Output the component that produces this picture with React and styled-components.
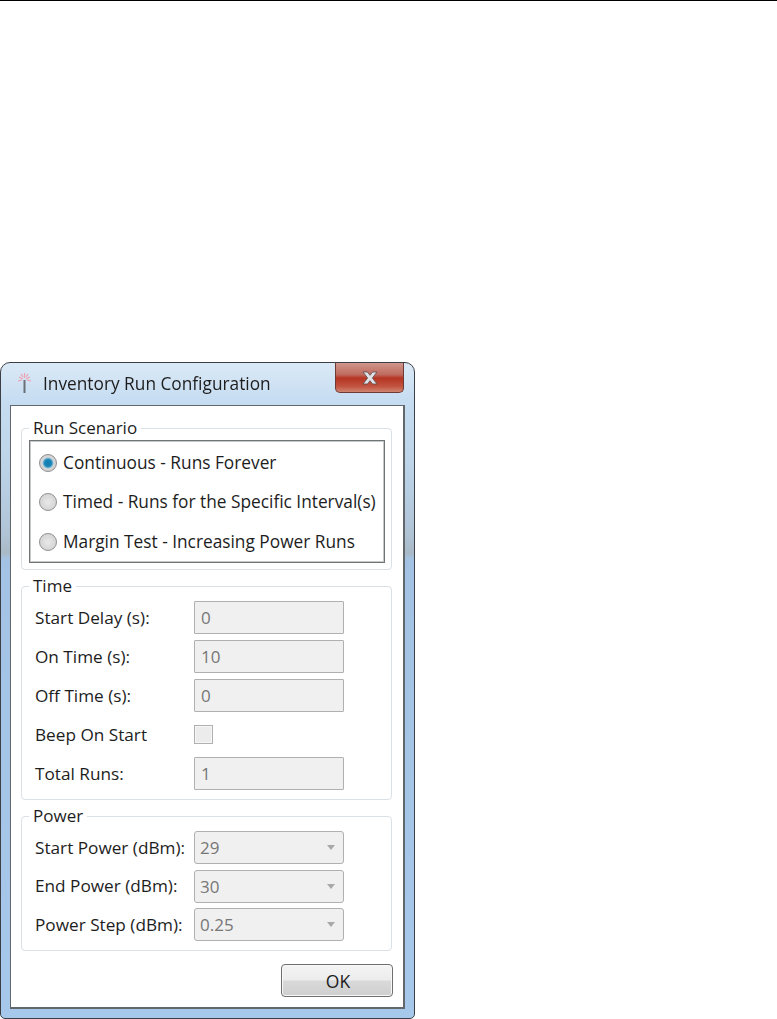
import React from "react";
import styled, { createGlobalStyle } from "styled-components";

const Global = createGlobalStyle`
  html, body { margin: 0; padding: 0; background: #fff; }
  body { font-family: "Open Sans", "Noto Sans", sans-serif; color: #1d1d1d; }
`;

const Page = styled.div`
  width: 777px;
  height: 1019px;
  overflow: hidden;
  border-top: 1px solid #000;
  box-sizing: border-box;
  padding-top: 361px;
`;

const Window = styled.div`
  width: 415px;
  height: 657px;
  box-sizing: border-box;
  border: 1px solid #3c4046;
  border-radius: 10px 10px 5px 5px;
  padding: 0 9px 9px;
  display: flex;
  flex-direction: column;
  filter: blur(0.35px);
  background: linear-gradient(180deg, #dbe9f6 0, #c5dcf1 6%, #bcd3e8 16%, #b0c4d6 26%, #a9b9c7 29%, #a4c3e4 30%, #a6c8ea 100%);
`;

const TitleBar = styled.div`
  height: 42px;
  display: flex;
  align-items: flex-start;
  flex-shrink: 0;
`;

const AppIcon = styled.svg`
  width: 20px;
  height: 24px;
  margin: 9px 0 0 5px;
  flex-shrink: 0;
`;

const Title = styled.div`
  margin: 10px 0 0 8px;
  font-size: 17.3px;
  line-height: 22px;
  white-space: nowrap;
  flex: 1;
`;

const CloseButton = styled.div`
  width: 69px;
  height: 30px;
  box-sizing: border-box;
  margin-right: 1px;
  border: 1px solid #6e3a36;
  border-top: 0;
  border-radius: 0 0 5px 5px;
  background: linear-gradient(180deg, #d0968c 0, #bf6a5e 40%, #b53523 52%, #c25240 80%, #cf8570 100%);
  display: flex;
  align-items: center;
  justify-content: center;
`;

const Client = styled.div`
  flex: 1;
  box-sizing: border-box;
  background: #fff;
  border: 1px solid #62676c;
  border-right-width: 2px;
  border-bottom-width: 2px;
  padding: 12px 11px 9px 10px;
  display: flex;
  flex-direction: column;
  gap: 6px;
`;

const Group = styled.fieldset`
  margin: 0;
  padding: 0;
  min-width: 0;
  border: 1px solid #d9e0e6;
  border-radius: 4px;
`;

const GroupBody = styled.div`
  padding: ${p => p.$pad};
`;

const Legend = styled.legend`
  margin-left: 7px;
  padding: 0 4px;
  font-size: 17px;
  line-height: 20px;
`;

const ScenarioBox = styled.div`
  height: 123px;
  box-sizing: border-box;
  border: 1px solid #6f7477;
  box-shadow: inset 0 0 0 1px #c8c8c8;
  padding: 2px 0 0 9px;
  display: flex;
  flex-direction: column;
  justify-content: space-around;
`;

const RadioRow = styled.div`
  display: flex;
  align-items: center;
  gap: 6px;
  font-size: 17.3px;
  line-height: 20px;
  white-space: nowrap;
`;

const RadioDot = styled.span`
  width: 18px;
  height: 18px;
  box-sizing: border-box;
  border-radius: 50%;
  border: 1px solid #8f8f8f;
  flex-shrink: 0;
  background: ${p => p.$on
    ? "radial-gradient(circle at 50% 50%, #0f7fb5 0, #1a83b4 30%, #6fb4d2 42%, #d8d8d8 52%, #c2c2c2 100%)"
    : "radial-gradient(circle at 50% 50%, #e9e9e9 0, #dcdcdc 45%, #cfcfcf 100%)"};
`;

const Form = styled.div`
  display: grid;
  grid-template-columns: 159px 150px;
  row-gap: ${p => p.$gap};
  grid-auto-rows: ${p => p.$row};
  align-items: center;
`;

const FieldLabel = styled.label`
  font-size: 17.2px;
  line-height: 20px;
  white-space: nowrap;
`;

const TextField = styled.div`
  height: 33px;
  box-sizing: border-box;
  border: 1px solid #b0b0b0;
  border-radius: 1px;
  background: #f0f0f0;
  color: #777;
  font-size: 17px;
  line-height: 31px;
  padding-left: 6px;
`;

const CheckBox = styled.div`
  width: 19px;
  height: 19px;
  box-sizing: border-box;
  border: 1px solid #b0b0b0;
  background: #ececec;
  box-shadow: inset 0 0 0 1px #f6f6f6;
`;

const Combo = styled.div`
  height: 33px;
  box-sizing: border-box;
  border: 1px solid #b0b0b0;
  border-radius: 3px;
  background: #f0f0f0;
  color: #777;
  font-size: 17px;
  padding: 0 8px 0 5px;
  display: flex;
  align-items: center;
  justify-content: space-between;
`;

const Arrow = styled.span`
  width: 0;
  height: 0;
  border-left: 4.5px solid transparent;
  border-right: 4.5px solid transparent;
  border-top: 5px solid #a8a8a8;
`;

const Footer = styled.div`
  display: flex;
  justify-content: flex-end;
  margin-top: 7px;
  margin-right: -1px;
`;

const OkButton = styled.div`
  width: 112px;
  height: 33px;
  box-sizing: border-box;
  border: 1px solid #6f6f6f;
  border-radius: 4px;
  background: linear-gradient(180deg, #f4f4f4 0, #ececec 48%, #d9d9d9 52%, #cfcfcf 100%);
  box-shadow: inset 0 0 0 1px #f8f8f8;
  font-size: 17.5px;
  padding-left: 2px;
  display: flex;
  align-items: center;
  justify-content: center;
`;

const timeRows = [
  ["Start Delay (s):", "0"],
  ["On Time (s):", "10"],
  ["Off Time (s):", "0"],
  ["Beep On Start", null],
  ["Total Runs:", "1"],
];
const powerRows = [
  ["Start Power (dBm):", "29"],
  ["End Power (dBm):", "30"],
  ["Power Step (dBm):", "0.25"],
];
const scenarios = [
  ["Continuous - Runs Forever", true],
  ["Timed - Runs for the Specific Interval(s)", false],
  ["Margin Test - Increasing Power Runs", false],
];

export default function App() {
  return (
    <Page>
      <Global />
      <Window>
        <TitleBar>
          <AppIcon viewBox="0 0 20 24">
            <rect x="8.5" y="8" width="2" height="13" fill="#6a6f75" />
            <g stroke="#ef9fb0" strokeWidth="1.2" fill="none">
              <path d="M9.5 1v5M4 5l4 2M15 5l-4 2M3 9l4-1M16 9l-4-1M6 2l2 3M13 2l-2 3" />
            </g>
          </AppIcon>
          <Title>Inventory Run Configuration</Title>
          <CloseButton>
            <svg width="20" height="14" viewBox="0 0 20 14">
              <path d="M3 1h4.5L10 4.3 12.5 1H17l-4.6 6 4.6 6h-4.5L10 9.7 7.5 13H3l4.6-6z" fill="#dfe1e6" stroke="#5c4a4a" strokeWidth="0.8" />
            </svg>
          </CloseButton>
        </TitleBar>
        <Client>
          <Group>
            <Legend>Run Scenario</Legend>
            <GroupBody $pad="2px 6px 6px 7px">
              <ScenarioBox>
                {scenarios.map(([text, on]) => (
                  <RadioRow key={text}>
                    <RadioDot $on={on} />
                    {text}
                  </RadioRow>
                ))}
              </ScenarioBox>
            </GroupBody>
          </Group>
          <Group>
            <Legend>Time</Legend>
            <GroupBody $pad="5px 13px 9px 13px">
              <Form $row="33px" $gap="6px">
                {timeRows.map(([label, value]) => (
                  <React.Fragment key={label}>
                    <FieldLabel>{label}</FieldLabel>
                    {value === null ? <CheckBox /> : <TextField>{value}</TextField>}
                  </React.Fragment>
                ))}
              </Form>
            </GroupBody>
          </Group>
          <Group>
            <Legend>Power</Legend>
            <GroupBody $pad="5px 13px 9px 13px">
              <Form $row="33px" $gap="5.5px">
                {powerRows.map(([label, value]) => (
                  <React.Fragment key={label}>
                    <FieldLabel>{label}</FieldLabel>
                    <Combo>
                      {value}
                      <Arrow />
                    </Combo>
                  </React.Fragment>
                ))}
              </Form>
            </GroupBody>
          </Group>
          <Footer>
            <OkButton>OK</OkButton>
          </Footer>
        </Client>
      </Window>
    </Page>
  );
}
